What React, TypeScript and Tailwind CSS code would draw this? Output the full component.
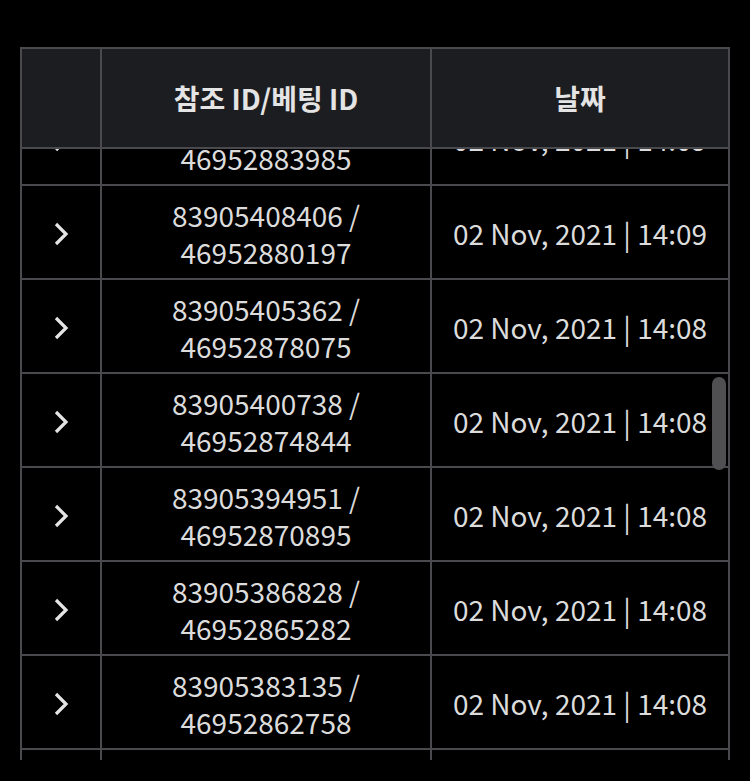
import type { ReactNode } from "react";

const rows = [
  { ref: "83905411540", bet: "46952883985", date: "02 Nov, 2021 | 14:09" },
  { ref: "83905408406", bet: "46952880197", date: "02 Nov, 2021 | 14:09" },
  { ref: "83905405362", bet: "46952878075", date: "02 Nov, 2021 | 14:08" },
  { ref: "83905400738", bet: "46952874844", date: "02 Nov, 2021 | 14:08" },
  { ref: "83905394951", bet: "46952870895", date: "02 Nov, 2021 | 14:08" },
  { ref: "83905386828", bet: "46952865282", date: "02 Nov, 2021 | 14:08" },
  { ref: "83905383135", bet: "46952862758", date: "02 Nov, 2021 | 14:08" },
  { ref: "83905379904", bet: "46952859461", date: "02 Nov, 2021 | 14:07" },
];

function Chevron() {
  return (
    <svg width="18" height="26" viewBox="0 0 18 26" fill="none">
      <polyline
        points="4,3 14,13 4,23"
        stroke="#e4e4e4"
        strokeWidth="3.2"
        strokeLinejoin="miter"
      />
    </svg>
  );
}

function Row({ children }: { children: ReactNode }) {
  return (
    <div className="flex h-[94px] shrink-0 border-b-2 border-[#4a4a4e]">
      {children}
    </div>
  );
}

export default function App() {
  return (
    <div
      className="h-[781px] w-full bg-black px-5 pt-[47px]"
      style={{ fontFamily: '"Noto Sans CJK KR", "Noto Sans", sans-serif' }}
    >
      <div className="relative flex h-[713px] flex-col overflow-hidden border-x-2 border-t-2 border-[#4a4a4e]">
        {/* 헤더 */}
        <div className="flex h-[100px] shrink-0 border-b-2 border-[#4a4a4e] bg-[#1c1d21] text-[28px] font-bold text-[#e4e4e4]">
          <div className="w-[80px] border-r-2 border-[#4a4a4e]" />
          <div className="flex w-[330px] items-center justify-center border-r-2 border-[#4a4a4e]">
            참조 ID/베팅 ID
          </div>
          <div className="flex flex-1 items-center justify-center">날짜</div>
        </div>

        {/* 본문 */}
        <div className="flex-1 overflow-hidden">
          <div className="-mt-[57px] flex flex-col text-[28px] leading-[37px] text-[#dcdcdc]">
            {rows.map((r) => (
              <Row key={r.ref}>
                <div className="flex w-[80px] items-center justify-center border-r-2 border-[#4a4a4e] pt-1">
                  <Chevron />
                </div>
                <div className="flex w-[330px] flex-col items-center justify-center border-r-2 border-[#4a4a4e] pt-[3px] text-center">
                  <span>{r.ref} /</span>
                  <span>{r.bet}</span>
                </div>
                <div className="flex flex-1 items-center justify-center pt-[2px]">{r.date}</div>
              </Row>
            ))}
          </div>
        </div>

        {/* 스크롤바 */}
        <div className="absolute right-[2px] top-[328px] h-[93px] w-[14px] rounded-full bg-[#505053]" />
      </div>
    </div>
  );
}
